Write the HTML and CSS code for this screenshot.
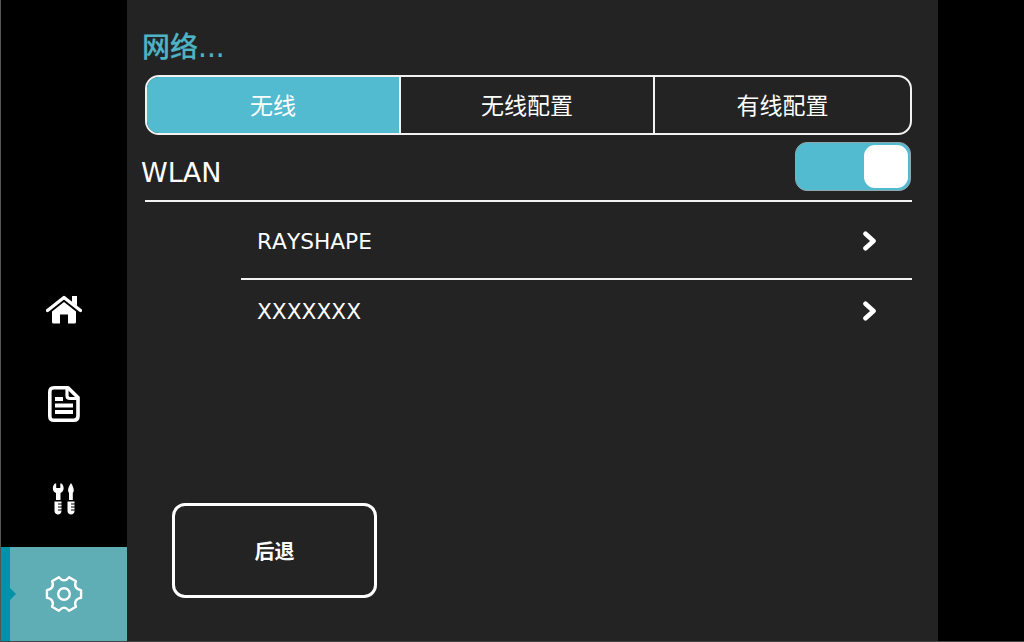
FILE: index.html
```html
<!DOCTYPE html>
<html>
  <head>
    <meta charset="UTF-8" />
    <title>网络</title>
    <link rel="stylesheet" href="styles.css">
  </head>
  <body>
    <div class="screen">
      <nav class="sidebar">
        <a class="nav-item">
          <svg width="36" height="30" viewBox="0 0 36 30">
            <path d="M1.500 15.500 L18 2.500 L34.500 15.500" fill="none" stroke="#fff" stroke-width="3.400" stroke-linecap="round" stroke-linejoin="round" />
            <path d="M26 1 H31 V11 L26 7 Z" fill="#fff" />
            <path d="M6 16.500 L18 7 L30 16.500 V27 Q30 28.500 28.500 28.500 H22 V19.500 H14 V28.500 H7.500 Q6 28.500 6 27 Z" fill="#fff" />
          </svg>
        </a>
        <a class="nav-item">
          <svg width="32" height="36" viewBox="0 0 32 36">
            <path d="M6 1.800 H20 L30 11.500 V30 Q30 34.200 25.800 34.200 H6 Q1.800 34.200 1.800 30 V6 Q1.800 1.800 6 1.800 Z" fill="none" stroke="#fff" stroke-width="3.600" stroke-linejoin="round" />
            <path d="M19 2 V9.500 Q19 12.500 22 12.500 H29.500" fill="none" stroke="#fff" stroke-width="3.200" />
            <path d="M7 13 H15 M7 19.500 H25 M7 26 H25" stroke="#fff" stroke-width="3.800" />
          </svg>
        </a>
        <a class="nav-item">
          <svg width="24" height="33" viewBox="0 0 24 33">
            <path d="M3 1.500 C0 4 0 9.500 4 11 V18 H8.500 V11 C12.500 9.500 12.500 4 9.500 1.500 L8.300 1.500 V6 H4.200 V1.500 Z" fill="#fff" />
            <path d="M2.500 19.500 H9.500 V29 C9.500 33.500 2.500 33.500 2.500 29 Z" fill="#fff" />
            <path d="M19 1 C20.500 3 21.800 6 21.800 9 L20.800 11 V18 H17 V11 L16 9 C16 6 17.500 3 19 1 Z" fill="#fff" />
            <path d="M15.500 19.500 H22.500 V29 C22.500 33.500 15.500 33.500 15.500 29 Z" fill="#fff" />
            <path d="M6 22 H10 M6 25 H10 M6 28 H10 M19 22 H23 M19 25 H23 M19 28 H23" stroke="#000" stroke-width="1.200" />
          </svg>
        </a>
        <a class="nav-item active">
          <svg width="38" height="38" viewBox="0 0 38 38">
            <path d="M36.050 15.060 L36.050 22.940 Q28.090 24.250 30.930 31.800 L24.120 35.730 Q19 29.500 13.880 35.730 L7.070 31.800 Q9.910 24.250 1.950 22.940 L1.950 15.060 Q9.910 13.750 7.070 6.200 L13.880 2.270 Q19 8.500 24.120 2.270 L30.930 6.200 Q28.090 13.750 36.050 15.060 Z" fill="none" stroke="#fff" stroke-width="2.400" stroke-linejoin="round" />
            <circle cx="19" cy="19" r="5.800" fill="none" stroke="#fff" stroke-width="2.400" />
          </svg>
        </a>
      </nav>
      <main class="content">
        <h1 class="title">网络...</h1>
        <div class="tabs">
          <div class="tab selected">无线</div>
          <div class="tab">无线配置</div>
          <div class="tab">有线配置</div>
        </div>
        <div class="wlan-row">
          <span class="wlan-label">WLAN</span>
          <div class="toggle"><span class="knob"></span></div>
        </div>
        <ul class="networks">
          <li class="network">
            <span>RAYSHAPE</span>
            <svg width="16" height="20" viewBox="0 0 16 20"><path d="M3.500 2.800 L11.500 10 L3.500 17.200" fill="none" stroke="#fff" stroke-width="4.600" stroke-linecap="round" stroke-linejoin="round" /></svg>
          </li>
          <li class="network">
            <span>XXXXXXX</span>
            <svg width="16" height="20" viewBox="0 0 16 20"><path d="M3.500 2.800 L11.500 10 L3.500 17.200" fill="none" stroke="#fff" stroke-width="4.600" stroke-linecap="round" stroke-linejoin="round" /></svg>
          </li>
        </ul>
        <button class="back" type="button">后退</button>
      </main>
      <div class="edge"></div>
    </div>
  </body>
</html>
```

FILE: styles.css
```css
html, body {
  margin: 0;
  height: 100%;
  background: #000;
  overflow: hidden;
}
body {
  font-family: "DejaVu Sans", "Noto Sans CJK SC", sans-serif;
  font-kerning: none;
  color: #fff;
}
.screen {
  display: flex;
  width: 1024px;
  height: 642px;
  box-sizing: border-box;
  border-left: 1px solid #555;
  border-bottom: 1px solid #444;
}
.sidebar {
  width: 126px;
  display: flex;
  flex-direction: column;
  justify-content: flex-end;
  background: #000;
}
.nav-item {
  height: 94px;
  display: flex;
  align-items: center;
  justify-content: center;
  position: relative;
}
.nav-item.active {
  margin-top: 2px;
  background: #5fadb5;
  box-shadow: inset 9px 0 0 #0092a8;
}
.nav-item.active:after {
  content: '';
  position: absolute;
  left: 9px;
  top: 41px;
  border-left: 6px solid #0092a8;
  border-top: 6px solid transparent;
  border-bottom: 6px solid transparent;
}
.content {
  width: 811px;
  box-sizing: border-box;
  padding: 31px 26px 0 15px;
  display: flex;
  flex-direction: column;
  background: #232323;
}
.title {
  margin: 0;
  font-size: 28px;
  line-height: 33px;
  font-weight: 500;
  color: #4fb3c6;
  -webkit-text-stroke: 0.2px #4fb3c6;
}
.tabs {
  display: flex;
  height: 60px;
  margin: 11px 0 0 3px;
  box-sizing: border-box;
  border: 2px solid #f2f2f2;
  border-radius: 14px;
  overflow: hidden;
}
.tab {
  width: 254px;
  padding: 0 0 2px 0;
  display: flex;
  align-items: center;
  justify-content: center;
  box-sizing: border-box;
  font-size: 23px;
  border-right: 2px solid #f2f2f2;
}
.tab:last-child {
  flex: 1;
  border-right: 0;
}
.tab.selected {
  background: #52bbd0;
}
.wlan-row {
  display: flex;
  align-items: center;
  justify-content: space-between;
  height: 48px;
  margin-top: 7px;
}
.wlan-label {
  margin: 12px 0 0 -1px;
  font-size: 27px;
}
.toggle {
  width: 116px;
  height: 49px;
  margin-right: 1px;
  box-sizing: border-box;
  padding: 2px;
  display: flex;
  justify-content: flex-end;
  background: #52bbd0;
  border: 1px solid #8fa6ac;
  border-radius: 12px;
}
.knob {
  width: 44px;
  height: 43px;
  background: #fff;
  border-radius: 11px;
}
.networks {
  list-style: none;
  margin: 10px 0 0 3px;
  padding: 0 0 0 96px;
  border-top: 2px solid #f2f2f2;
  background: linear-gradient(#f2f2f2, #f2f2f2) no-repeat 96px 76px / 100% 2px;
}
.network {
  height: 66px;
  padding: 0 34px 0 16px;
  display: flex;
  align-items: center;
  justify-content: space-between;
  font-size: 21.700px;
}
.network:first-child {
  height: 76px;
  padding-top: 2px;
  box-sizing: border-box;
}
.back {
  width: 205px;
  height: 95px;
  margin: auto 0 43px 30px;
  background: transparent;
  border: 3px solid #fff;
  border-radius: 13px;
  color: #fff;
  font-family: inherit;
  font-size: 20px;
  font-weight: 700;
}
.edge {
  flex: 1;
  background: #000;
}
```
